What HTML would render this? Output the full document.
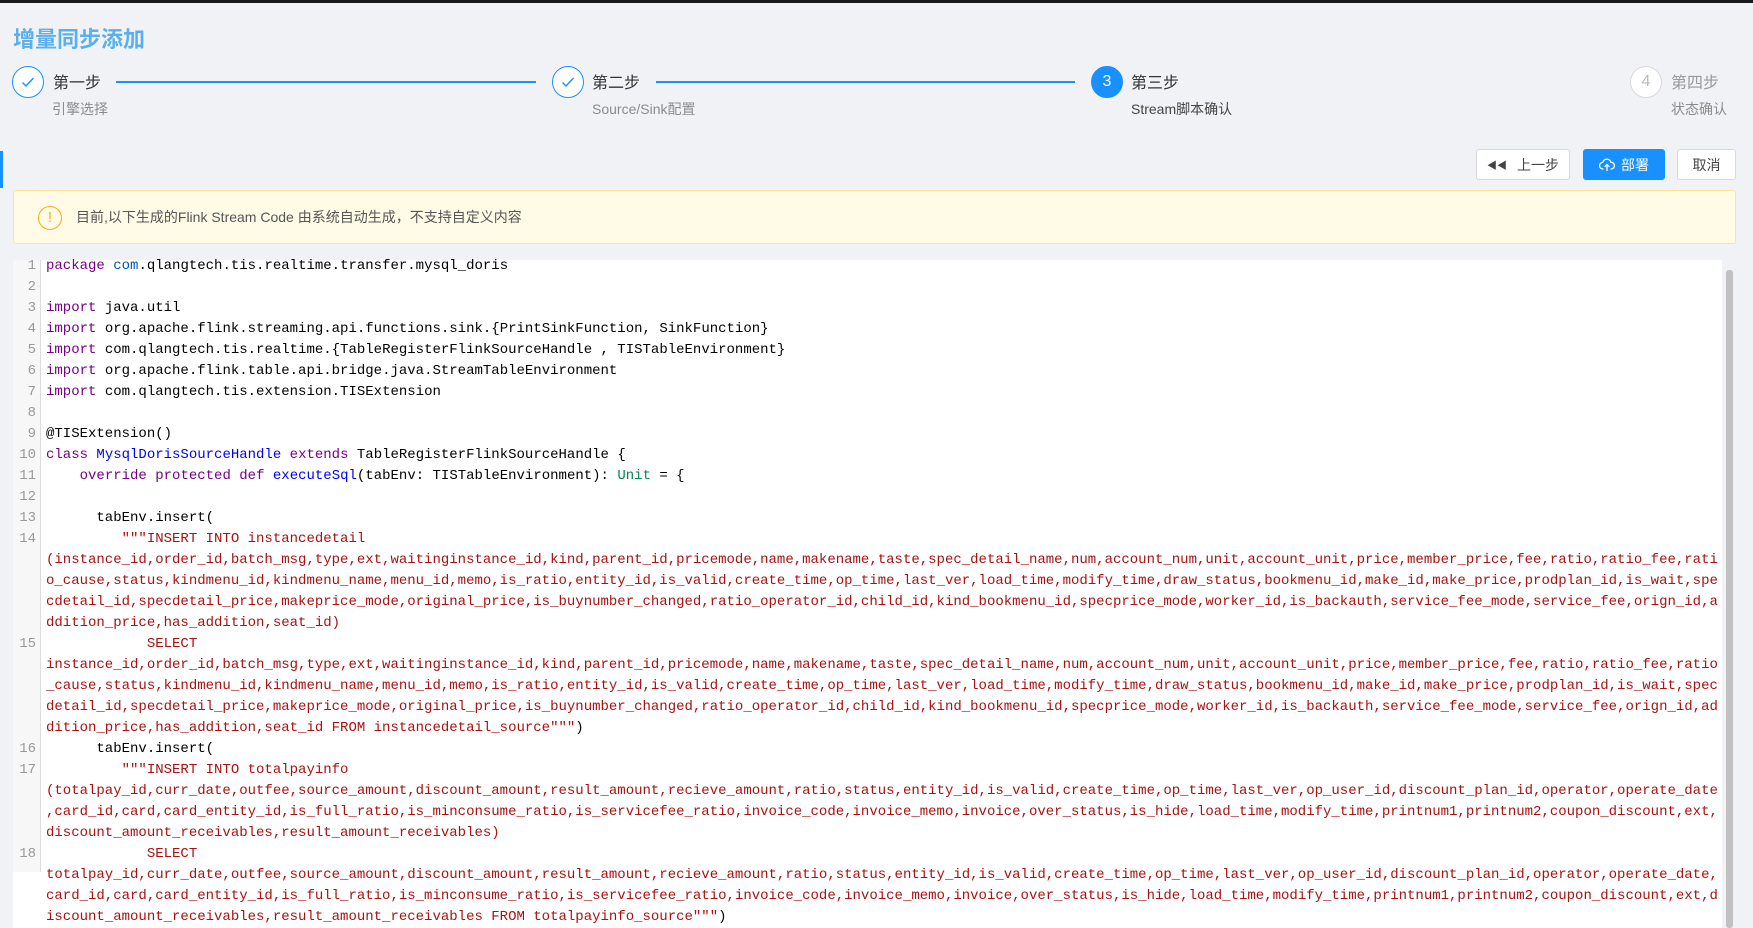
<!DOCTYPE html>
<html><head><meta charset="utf-8"><style>
*{margin:0;padding:0;box-sizing:border-box}
html,body{width:1753px;height:928px;overflow:hidden}
body{background:#f0f2f5;font-family:"Liberation Sans","Noto Sans CJK SC",sans-serif;position:relative;color:#333}
.topbar{position:absolute;left:0;top:0;width:1753px;height:3px;background:#1a1a1a}
.title{position:absolute;left:13px;top:22px;font-size:22px;font-weight:bold;color:#5ab0ee}
.circ{position:absolute;top:66px;width:32px;height:32px;border-radius:50%;border:1.5px solid #1890ff;background:#fff;display:flex;align-items:center;justify-content:center;color:#1890ff;font-size:16px}
.circ.act{background:#1890ff;color:#fff}
.circ.wait{border-color:#d9d9d9;color:#bbb}
.st{position:absolute;top:69px;font-size:16px;color:#333}
.sub{position:absolute;top:99px;font-size:14px;color:#8c8c8c}
.ln{position:absolute;top:81px;height:1.5px;background:#1890ff}
.accent{position:absolute;left:0;top:151px;width:3px;height:37px;background:#1890ff}
.btn{position:absolute;top:149px;height:31px;border:1px solid #d9d9d9;background:#fff;border-radius:3px;font-size:14px;display:flex;align-items:center;justify-content:center;color:#444}
.btn.pri{background:#1890ff;border-color:#1890ff;color:#fff}
.alert{position:absolute;left:13px;top:190px;width:1723px;height:54px;background:#fffbe6;border:1px solid #ffe58f;border-radius:3px}
.alert .ic{position:absolute;left:24px;top:15px;width:24px;height:24px;border:1.5px solid #faad14;border-radius:50%;color:#faad14;font-size:15px;text-align:center;line-height:21px}
.alert .tx{position:absolute;left:62px;top:16px;font-size:14px;color:#555}
.code{position:absolute;left:13px;top:260px;width:1709px;height:668px;background:#fff}
.gut{position:absolute;left:13px;top:260px;width:28px;height:612px;background:#f7f7f7;border-right:1px solid #ddd}
.scroll{position:absolute;left:1726px;top:270px;width:7px;height:658px;background:#c1c1c1;border-radius:3px}
.lines{position:absolute;left:13px;top:256px;font-family:"Liberation Mono",monospace;font-size:14px;line-height:21px}
.r{height:21px;position:relative}
.n{position:absolute;left:0;width:23px;text-align:right;color:#999}
.c{position:absolute;left:33px;color:#000;white-space:pre}
.k{color:#708}.v{color:#05a}.d{color:#00f}.t{color:#085}.s{color:#a11}
</style></head><body>
<div class="topbar"></div>
<div class="title">增量同步添加</div>

<div class="circ" style="left:12px"><svg width="16" height="16" viewBox="0 0 16 16"><path d="M2.5 8.5l3.5 3.5 7.5-8" fill="none" stroke="#1890ff" stroke-width="1.4"/></svg></div>
<div class="st" style="left:53px">第一步</div><div class="sub" style="left:52px">引擎选择</div>
<div class="ln" style="left:116px;width:420px"></div>
<div class="circ" style="left:552px"><svg width="16" height="16" viewBox="0 0 16 16"><path d="M2.5 8.5l3.5 3.5 7.5-8" fill="none" stroke="#1890ff" stroke-width="1.4"/></svg></div>
<div class="st" style="left:592px">第二步</div><div class="sub" style="left:592px">Source/Sink配置</div>
<div class="ln" style="left:656px;width:419px"></div>
<div class="circ act" style="left:1091px">3</div>
<div class="st" style="left:1131px">第三步</div><div class="sub" style="left:1131px;color:#444">Stream脚本确认</div>
<div class="circ wait" style="left:1630px">4</div>
<div class="st" style="left:1671px;color:#999">第四步</div><div class="sub" style="left:1671px">状态确认</div>

<div class="accent"></div>
<div class="btn" style="left:1476px;width:94px"><span style="font-size:10px;margin-right:10px">◀◀</span>上一步</div>
<div class="btn pri" style="left:1583px;width:82px"><svg width="16" height="14" viewBox="0 0 16 14" style="margin-right:6px"><path d="M4.5 11H4a3.3 3.3 0 0 1-.3-6.6A4.3 4.3 0 0 1 12 4.3a3.3 3.3 0 0 1 .2 6.7h-.7M8 13V6.5M5.7 8.8L8 6.5l2.3 2.3" fill="none" stroke="#fff" stroke-width="1.3"/></svg>部署</div>
<div class="btn" style="left:1677px;width:59px">取消</div>

<div class="alert"><div class="ic">!</div><div class="tx">目前,以下生成的Flink Stream Code 由系统自动生成，不支持自定义内容</div></div>

<div class="code"></div>
<div class="gut"></div>
<div class="scroll"></div>
<div class="lines"><div class="r"><span class="n">1</span><span class="c"><span class="k">package</span> <span class="v">com</span>.qlangtech.tis.realtime.transfer.mysql_doris</span></div><div class="r"><span class="n">2</span></div><div class="r"><span class="n">3</span><span class="c"><span class="k">import</span> java.util</span></div><div class="r"><span class="n">4</span><span class="c"><span class="k">import</span> org.apache.flink.streaming.api.functions.sink.{PrintSinkFunction, SinkFunction}</span></div><div class="r"><span class="n">5</span><span class="c"><span class="k">import</span> com.qlangtech.tis.realtime.{TableRegisterFlinkSourceHandle , TISTableEnvironment}</span></div><div class="r"><span class="n">6</span><span class="c"><span class="k">import</span> org.apache.flink.table.api.bridge.java.StreamTableEnvironment</span></div><div class="r"><span class="n">7</span><span class="c"><span class="k">import</span> com.qlangtech.tis.extension.TISExtension</span></div><div class="r"><span class="n">8</span></div><div class="r"><span class="n">9</span><span class="c">@TISExtension()</span></div><div class="r"><span class="n">10</span><span class="c"><span class="k">class</span> <span class="d">MysqlDorisSourceHandle</span> <span class="k">extends</span> TableRegisterFlinkSourceHandle {</span></div><div class="r"><span class="n">11</span><span class="c">    <span class="k">override</span> <span class="k">protected</span> <span class="k">def</span> <span class="d">executeSql</span>(tabEnv: TISTableEnvironment): <span class="t">Unit</span> = {</span></div><div class="r"><span class="n">12</span></div><div class="r"><span class="n">13</span><span class="c">      tabEnv.insert(</span></div><div class="r"><span class="n">14</span><span class="c s">         """INSERT INTO instancedetail</span></div><div class="r"><span class="c s">(instance_id,order_id,batch_msg,type,ext,waitinginstance_id,kind,parent_id,pricemode,name,makename,taste,spec_detail_name,num,account_num,unit,account_unit,price,member_price,fee,ratio,ratio_fee,rati</span></div><div class="r"><span class="c s">o_cause,status,kindmenu_id,kindmenu_name,menu_id,memo,is_ratio,entity_id,is_valid,create_time,op_time,last_ver,load_time,modify_time,draw_status,bookmenu_id,make_id,make_price,prodplan_id,is_wait,spe</span></div><div class="r"><span class="c s">cdetail_id,specdetail_price,makeprice_mode,original_price,is_buynumber_changed,ratio_operator_id,child_id,kind_bookmenu_id,specprice_mode,worker_id,is_backauth,service_fee_mode,service_fee,orign_id,a</span></div><div class="r"><span class="c s">ddition_price,has_addition,seat_id)</span></div><div class="r"><span class="n">15</span><span class="c s">            SELECT</span></div><div class="r"><span class="c s">instance_id,order_id,batch_msg,type,ext,waitinginstance_id,kind,parent_id,pricemode,name,makename,taste,spec_detail_name,num,account_num,unit,account_unit,price,member_price,fee,ratio,ratio_fee,ratio</span></div><div class="r"><span class="c s">_cause,status,kindmenu_id,kindmenu_name,menu_id,memo,is_ratio,entity_id,is_valid,create_time,op_time,last_ver,load_time,modify_time,draw_status,bookmenu_id,make_id,make_price,prodplan_id,is_wait,spec</span></div><div class="r"><span class="c s">detail_id,specdetail_price,makeprice_mode,original_price,is_buynumber_changed,ratio_operator_id,child_id,kind_bookmenu_id,specprice_mode,worker_id,is_backauth,service_fee_mode,service_fee,orign_id,ad</span></div><div class="r"><span class="c"><span class="s">dition_price,has_addition,seat_id FROM instancedetail_source"""</span>)</span></div><div class="r"><span class="n">16</span><span class="c">      tabEnv.insert(</span></div><div class="r"><span class="n">17</span><span class="c s">         """INSERT INTO totalpayinfo</span></div><div class="r"><span class="c s">(totalpay_id,curr_date,outfee,source_amount,discount_amount,result_amount,recieve_amount,ratio,status,entity_id,is_valid,create_time,op_time,last_ver,op_user_id,discount_plan_id,operator,operate_date</span></div><div class="r"><span class="c s">,card_id,card,card_entity_id,is_full_ratio,is_minconsume_ratio,is_servicefee_ratio,invoice_code,invoice_memo,invoice,over_status,is_hide,load_time,modify_time,printnum1,printnum2,coupon_discount,ext,</span></div><div class="r"><span class="c s">discount_amount_receivables,result_amount_receivables)</span></div><div class="r"><span class="n">18</span><span class="c s">            SELECT</span></div><div class="r"><span class="c s">totalpay_id,curr_date,outfee,source_amount,discount_amount,result_amount,recieve_amount,ratio,status,entity_id,is_valid,create_time,op_time,last_ver,op_user_id,discount_plan_id,operator,operate_date,</span></div><div class="r"><span class="c s">card_id,card,card_entity_id,is_full_ratio,is_minconsume_ratio,is_servicefee_ratio,invoice_code,invoice_memo,invoice,over_status,is_hide,load_time,modify_time,printnum1,printnum2,coupon_discount,ext,d</span></div><div class="r"><span class="c"><span class="s">iscount_amount_receivables,result_amount_receivables FROM totalpayinfo_source"""</span>)</span></div></div>
</body></html>
